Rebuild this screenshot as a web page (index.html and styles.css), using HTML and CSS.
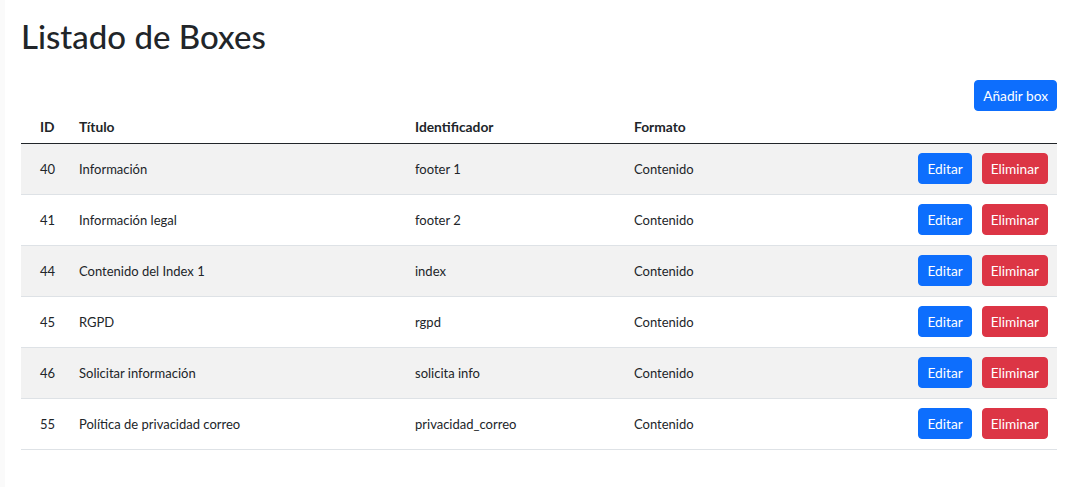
FILE: index.html
```html
<!DOCTYPE html>
<html lang="es">
<head>
<meta charset="utf-8">
<title>Listado de Boxes</title>
<link rel="stylesheet" href="styles.css">
</head>
<body>
<div class="edge"></div>
<main class="page">
  <h1 class="title">Listado de Boxes</h1>
  <div class="toolbar">
    <button class="btn btn-primary">Añadir box</button>
  </div>
  <table class="list">
    <colgroup>
      <col class="c-id"><col class="c-title"><col class="c-ident"><col class="c-format"><col class="c-actions">
    </colgroup>
    <thead>
      <tr><th class="cell-id">ID</th><th>Título</th><th>Identificador</th><th>Formato</th><th></th></tr>
    </thead>
    <tbody>
      <tr class="odd"><td class="cell-id">40</td><td>Información</td><td>footer 1</td><td>Contenido</td><td class="actions"><button class="btn btn-primary">Editar</button><button class="btn btn-danger">Eliminar</button></td></tr>
      <tr><td class="cell-id">41</td><td>Información legal</td><td>footer 2</td><td>Contenido</td><td class="actions"><button class="btn btn-primary">Editar</button><button class="btn btn-danger">Eliminar</button></td></tr>
      <tr class="odd"><td class="cell-id">44</td><td>Contenido del Index 1</td><td>index</td><td>Contenido</td><td class="actions"><button class="btn btn-primary">Editar</button><button class="btn btn-danger">Eliminar</button></td></tr>
      <tr><td class="cell-id">45</td><td>RGPD</td><td>rgpd</td><td>Contenido</td><td class="actions"><button class="btn btn-primary">Editar</button><button class="btn btn-danger">Eliminar</button></td></tr>
      <tr class="odd"><td class="cell-id">46</td><td>Solicitar información</td><td>solicita info</td><td>Contenido</td><td class="actions"><button class="btn btn-primary">Editar</button><button class="btn btn-danger">Eliminar</button></td></tr>
      <tr><td class="cell-id">55</td><td>Política de privacidad correo</td><td>privacidad_correo</td><td>Contenido</td><td class="actions"><button class="btn btn-primary">Editar</button><button class="btn btn-danger">Eliminar</button></td></tr>
    </tbody>
  </table>
</main>
</body>
</html>
```
FILE: styles.css
```css
html, body {
  margin: 0;
  padding: 0;
  background: #ffffff;
}
body {
  font-family: Lato, "Noto Sans", "Liberation Sans", sans-serif;
  color: #212529;
  font-size: 13px;
}
.edge {
  position: fixed;
  left: 0;
  top: 0;
  bottom: 0;
  width: 5px;
  background: #fafafa;
}
.page {
  padding: 13px 31px 0 21px;
}
.title {
  margin: 0 0 21px;
  font-size: 33px;
  line-height: 46px;
  font-weight: 500;
  color: #212529;
}
.toolbar {
  display: flex;
  justify-content: flex-end;
}
.btn {
  font-family: inherit;
  font-size: 13.7px;
  line-height: 21px;
  padding: 4px 8px;
  border: 1px solid transparent;
  border-radius: 4px;
  color: #fff;
  cursor: pointer;
}
.btn-primary {
  background: #0d6efd;
  border-color: #0d6efd;
}
.btn-danger {
  background: #dc3545;
  border-color: #dc3545;
}
.list {
  width: 100%;
  border-collapse: collapse;
  table-layout: fixed;
}
.c-id { width: 50px; }
.c-title { width: 336px; }
.c-ident { width: 219px; }
.c-format { width: 251px; }
.c-actions { width: 180px; }
.list th {
  text-align: left;
  font-size: 13.8px;
  font-weight: 700;
  height: 32px;
  padding: 0 8px;
  box-sizing: border-box;
  border-bottom: 1px solid #212529;
  vertical-align: middle;
}
.list td {
  height: 51px;
  padding: 0 8px;
  box-sizing: border-box;
  border-bottom: 1px solid #dee2e6;
  vertical-align: middle;
}
.list tr.odd td {
  background: #f2f2f2;
}
.list .cell-id {
  padding-left: 19px;
}
.list .actions {
  text-align: right;
  white-space: nowrap;
  padding-right: 9px;
}
.actions .btn {
  margin-left: 10px;
}
```
